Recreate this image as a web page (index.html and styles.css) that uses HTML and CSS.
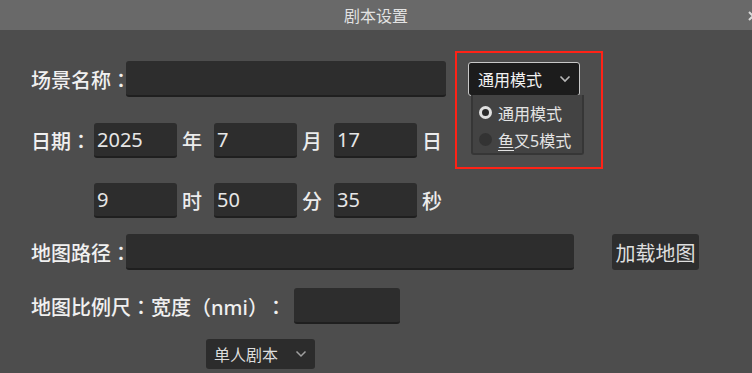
FILE: index.html
```html
<!DOCTYPE html>
<html lang="zh-CN">
<head>
    <meta charset="UTF-8">
    <title>剧本设置</title>
    <link rel="stylesheet" href="styles.css">
</head>
<body>
<div class="dialog">
    <div class="dialog-title">
        <span class="title-text">剧本设置</span>
        <svg class="title-close" width="10" height="12" viewBox="0 0 10 12"><path d="M2 2 L10 10 M10 2 L2 10" stroke="#d8d8d8" stroke-width="2"/></svg>
    </div>

    <div class="dialog-body">
        <div class="row row-name">
            <span class="label label-wide">场景名称<span class="colon" lang="zh-TW">：</span></span>
            <input class="field field-name" type="text">
            <div class="select select-mode">
                <span>通用模式</span>
                <svg class="chevron" width="12" height="8" viewBox="0 0 12 8"><path d="M1.5 1.5 L6 6 L10.5 1.5" fill="none" stroke="#b8b8b8" stroke-width="1.6"/></svg>
            </div>
        </div>

        <div class="row row-date">
            <span class="label label-short">日期<span class="colon" lang="zh-TW">：</span></span>
            <input class="field field-num" type="text" value="2025">
            <span class="unit">年</span>
            <input class="field field-num" type="text" value="7">
            <span class="unit">月</span>
            <input class="field field-num" type="text" value="17">
            <span class="unit">日</span>
        </div>

        <div class="row row-time">
            <span class="label label-short"></span>
            <input class="field field-num" type="text" value="9">
            <span class="unit">时</span>
            <input class="field field-num" type="text" value="50">
            <span class="unit">分</span>
            <input class="field field-num" type="text" value="35">
            <span class="unit">秒</span>
        </div>

        <div class="row row-map">
            <span class="label label-wide">地图路径<span class="colon" lang="zh-TW">：</span></span>
            <input class="field field-map" type="text">
            <button class="btn">加载地图</button>
        </div>

        <div class="row row-scale">
            <span class="label label-scale">地图比例尺<span class="colon" lang="zh-TW">：</span>宽度（nmi）<span class="colon colon-gap" lang="zh-TW">：</span></span>
            <input class="field field-scale" type="text">
        </div>

        <div class="row row-type">
            <div class="select select-type">
                <span>单人剧本</span>
                <svg class="chevron" width="12" height="8" viewBox="0 0 12 8"><path d="M1.5 1.5 L6 6 L10.5 1.5" fill="none" stroke="#a0a0a0" stroke-width="1.5"/></svg>
            </div>
        </div>

        <!-- open popup of the mode select -->
        <div class="popup">
            <div class="popup-item"><span class="radio radio-on"></span>通用模式</div>
            <div class="popup-item"><span class="radio"></span><u>鱼</u>叉5模式</div>
        </div>
        <div class="mark"></div>
    </div>
</div>
</body>
</html>
```

FILE: styles.css
```css
* { box-sizing: border-box; }
html, body { margin: 0; padding: 0; }
body {
    width: 752px;
    height: 373px;
    overflow: hidden;
    background-color: #4d4d4d;
    font-family: "Noto Sans", "Noto Sans CJK SC", sans-serif;
    color: #ececec;
}
.dialog-title {
    height: 30px;
    background-color: #696969;
    display: flex;
    align-items: center;
    justify-content: center;
    position: relative;
    font-size: 16px;
    color: #e2e2e2;
}
.title-close {
    position: absolute;
    right: -5px;
    top: 10px;
}
.dialog-body {
    position: relative;
    padding: 31px 0 0 31px;
    height: 343px;
}
.row {
    display: flex;
    align-items: center;
}
.row-date { margin-top: 26px; }
.row-time { margin-top: 25px; }
.row-map { margin-top: 16px; }
.row-scale { margin-top: 18px; }
.row-type { margin-top: 15px; }

.label {
    flex-shrink: 0;
    font-size: 20px;
    font-weight: 500;
    white-space: nowrap;
    color: #f0f0f0;
}
.colon {
    font-family: "Noto Sans CJK TC", sans-serif;
}
.colon-gap { padding-left: 8px; }
.label-wide { width: 95px; }
.label-short { width: 63px; }
.label-scale { width: 263px; }

.field {
    flex-shrink: 0;
    height: 36px;
    background-color: #2d2d2d;
    border: none;
    border-bottom: 2px solid #1f1f1f;
    border-radius: 3px;
    color: #e6e6e6;
    font-family: inherit;
    font-size: 20px;
    padding: 0 4px 0 3px;
    outline: none;
}
.field-name { width: 320px; }
.field-num { width: 83px; height: 35px; }
.field-map { width: 448px; }
.field-scale { width: 106px; }

.unit {
    width: 37px;
    padding-left: 5px;
    font-size: 20px;
    font-weight: 500;
}

.btn {
    margin-left: 38px;
    width: 87px;
    height: 36px;
    background-color: #2e2e2e;
    border: none;
    border-radius: 3px;
    color: #dedede;
    font-family: inherit;
    font-size: 20px;
    padding: 0;
}

.select {
    display: flex;
    align-items: center;
    justify-content: space-between;
    border-radius: 3px;
    color: #f2f2f2;
}
.select-mode {
    margin-left: 22px;
    width: 112px;
    height: 34px;
    background-color: #1c1c1c;
    border: 1.5px solid #c8c8c8;
    padding: 0 8px 0 9px;
    font-size: 16px;
}
.select-type {
    margin-left: 175px;
    width: 109px;
    height: 30px;
    background-color: #2c2c2c;
    padding: 0 8px 0 8px;
    font-size: 16px;
    color: #dddddd;
}

.popup {
    position: absolute;
    left: 471px;
    top: 65px;
    width: 113px;
    height: 60px;
    background-color: #434343;
    border: 2px solid #363636;
    border-top: none;
    border-radius: 0 0 3px 3px;
    padding: 4px 0 0 6px;
}
.popup-item {
    display: flex;
    align-items: center;
    height: 27px;
    font-size: 16px;
    color: #e4e4e4;
}
.popup-item u { text-underline-offset: 3px; }
.radio {
    width: 13px;
    height: 13px;
    border-radius: 50%;
    background-color: #333333;
    margin-right: 6px;
}
.radio-on {
    background-color: #2a2a2a;
    border: 3px solid #e0e0e0;
}

.mark {
    position: absolute;
    left: 455px;
    top: 21px;
    width: 148px;
    height: 118px;
    border: 2px solid #ff2216;
}
```
